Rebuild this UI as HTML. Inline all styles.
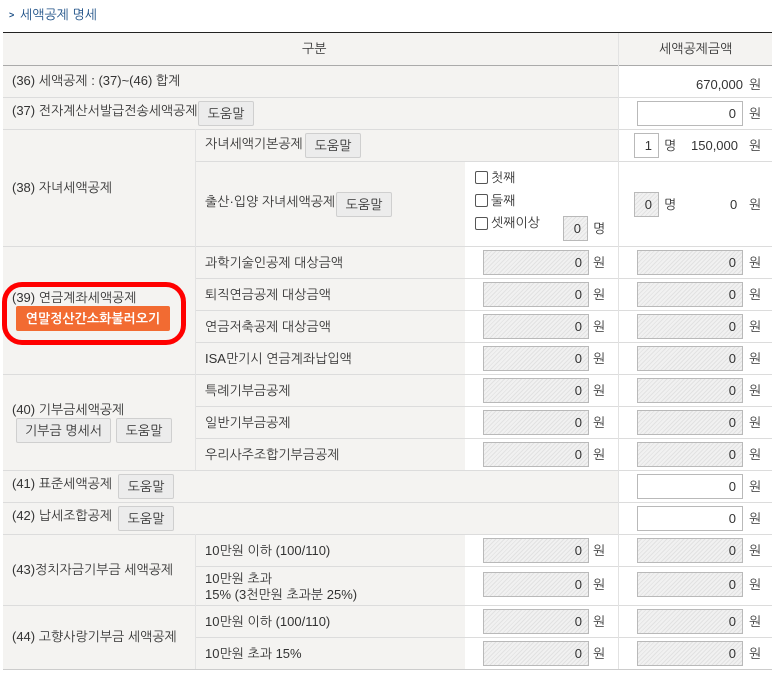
<!DOCTYPE html>
<html><head><meta charset="utf-8"><style>
*{margin:0;padding:0;box-sizing:border-box}
body{width:783px;height:678px;background:#fff;position:relative;font-family:"Liberation Sans","NanumGothic","Noto Sans CJK KR",sans-serif;font-size:13px;color:#333;overflow:hidden}
.a{position:absolute}
.g{position:absolute;background:#f4f3f1}
.hl{position:absolute;height:1px;background:#dcdcdc}
.vl{position:absolute;width:1px;background:#e2e2e2}
.t{position:absolute;white-space:nowrap;line-height:16px}
.in{position:absolute;height:25px;border:1px solid #b9b9b9;text-align:right;padding-right:6px;line-height:23px;color:#333;background:repeating-linear-gradient(135deg,#f1f1f1 0 2px,#e2e2e2 2px 3px)}
.w{background:#fff}
.btn{position:absolute;height:25px;border:1px solid #cfcfcf;background:#ececec;border-radius:2px;text-align:center;line-height:23px;color:#333}
.cb{position:absolute;width:13px;height:13px;border:1px solid #555;border-radius:2px;background:#fff}
</style></head><body>
<div class="t" style="left:9px;top:7px;color:#1c4f86;font-size:9px;font-weight:bold">&gt;</div>
<div class="t" style="left:20px;top:7px;color:#1c4f86;font-size:13px">세액공제 명세</div>

<div class="g" style="left:3px;top:33px;width:615px;height:636px"></div>
<div class="a" style="left:465px;top:246px;width:153px;height:224px;background:#fff"></div>
<div class="a" style="left:465px;top:161px;width:153px;height:85px;background:#fff"></div>
<div class="a" style="left:465px;top:534px;width:153px;height:135px;background:#fff"></div>
<div class="a" style="left:618px;top:33px;width:154px;height:32px;background:#f4f3f1"></div>

<div class="a" style="left:3px;top:32px;width:769px;height:1px;background:#222"></div>
<div class="a" style="left:3px;top:65px;width:769px;height:1px;background:#aaa"></div>
<div class="hl" style="left:3px;top:97px;width:769px"></div>
<div class="hl" style="left:3px;top:129px;width:769px"></div>
<div class="hl" style="left:195px;top:161px;width:577px"></div>
<div class="hl" style="left:3px;top:246px;width:769px"></div>
<div class="hl" style="left:195px;top:278px;width:577px"></div>
<div class="hl" style="left:195px;top:310px;width:577px"></div>
<div class="hl" style="left:195px;top:342px;width:577px"></div>
<div class="hl" style="left:3px;top:374px;width:769px"></div>
<div class="hl" style="left:195px;top:406px;width:577px"></div>
<div class="hl" style="left:195px;top:438px;width:577px"></div>
<div class="hl" style="left:3px;top:470px;width:769px"></div>
<div class="hl" style="left:3px;top:502px;width:769px"></div>
<div class="hl" style="left:3px;top:534px;width:769px"></div>
<div class="hl" style="left:195px;top:566px;width:577px"></div>
<div class="hl" style="left:3px;top:605px;width:769px"></div>
<div class="hl" style="left:195px;top:637px;width:577px"></div>
<div class="hl" style="left:3px;top:669px;width:769px;background:#ccc"></div>
<div class="vl" style="left:618px;top:33px;height:636px"></div>
<div class="vl" style="left:195px;top:129px;height:341px"></div>
<div class="vl" style="left:195px;top:534px;height:135px"></div>

<div class="t" style="left:302px;top:41px">구분</div>
<div class="t" style="left:659px;top:41px">세액공제금액</div>

<div class="t" style="left:12px;top:73px">(36) 세액공제 : (37)~(46) 합계</div>
<div class="t" style="left:696px;top:77px">670,000</div><div class="t" style="left:749px;top:77px">원</div>

<div class="t" style="left:12px;top:103px">(37) 전자계산서발급전송세액공제</div>
<div class="btn" style="left:198px;top:101px;width:56px">도움말</div>
<div class="in w" style="left:637px;top:101px;width:106px">0</div><div class="t" style="left:749px;top:106px">원</div>

<div class="t" style="left:12px;top:180px">(38) 자녀세액공제</div>
<div class="t" style="left:205px;top:136px">자녀세액기본공제</div>
<div class="btn" style="left:305px;top:133px;width:56px">도움말</div>
<div class="in w" style="left:634px;top:133px;width:25px">1</div><div class="t" style="left:664px;top:138px">명</div>
<div class="t" style="left:691px;top:138px">150,000</div><div class="t" style="left:749px;top:138px">원</div>
<div class="t" style="left:205px;top:194px">출산·입양 자녀세액공제</div>
<div class="btn" style="left:336px;top:192px;width:56px">도움말</div>
<div class="cb" style="left:475px;top:171px"></div><div class="t" style="left:491px;top:170px">첫째</div>
<div class="cb" style="left:475px;top:194px"></div><div class="t" style="left:491px;top:193px">둘째</div>
<div class="cb" style="left:475px;top:217px"></div><div class="t" style="left:491px;top:215px">셋째이상</div>
<div class="in" style="left:563px;top:216px;width:25px">0</div><div class="t" style="left:593px;top:221px">명</div>
<div class="in" style="left:634px;top:192px;width:25px">0</div><div class="t" style="left:664px;top:197px">명</div>
<div class="t" style="left:730px;top:197px">0</div><div class="t" style="left:749px;top:197px">원</div>

<div class="t" style="left:12px;top:290px">(39) 연금계좌세액공제</div>
<div class="a" style="left:2px;top:282px;width:184px;height:63px;border:5px solid #f00;border-radius:20px"></div>
<div class="a" style="left:16px;top:306px;width:154px;height:25px;background:#f26b32;border-radius:2px;color:#fff;font-weight:bold;text-align:center;line-height:25px;font-size:13px">연말정산간소화불러오기</div>
<div class="t" style="left:205px;top:255px">과학기술인공제 대상금액</div>
<div class="t" style="left:205px;top:287px">퇴직연금공제 대상금액</div>
<div class="t" style="left:205px;top:319px">연금저축공제 대상금액</div>
<div class="t" style="left:205px;top:351px">ISA만기시 연금계좌납입액</div>

<div class="t" style="left:12px;top:402px">(40) 기부금세액공제</div>
<div class="btn" style="left:16px;top:418px;width:95px">기부금 명세서</div>
<div class="btn" style="left:116px;top:418px;width:56px">도움말</div>
<div class="t" style="left:205px;top:383px">특례기부금공제</div>
<div class="t" style="left:205px;top:415px">일반기부금공제</div>
<div class="t" style="left:205px;top:447px">우리사주조합기부금공제</div>

<div class="t" style="left:12px;top:476px">(41) 표준세액공제</div>
<div class="btn" style="left:118px;top:474px;width:56px">도움말</div>
<div class="in w" style="left:637px;top:474px;width:106px">0</div><div class="t" style="left:749px;top:479px">원</div>
<div class="t" style="left:12px;top:508px">(42) 납세조합공제</div>
<div class="btn" style="left:118px;top:506px;width:56px">도움말</div>
<div class="in w" style="left:637px;top:506px;width:106px">0</div><div class="t" style="left:749px;top:511px">원</div>

<div class="t" style="left:12px;top:562px">(43)정치자금기부금 세액공제</div>
<div class="t" style="left:205px;top:543px">10만원 이하 (100/110)</div>
<div class="t" style="left:205px;top:571px">10만원 초과</div>
<div class="t" style="left:205px;top:587px">15% (3천만원 초과분 25%)</div>
<div class="t" style="left:12px;top:629px">(44) 고향사랑기부금 세액공제</div>
<div class="t" style="left:205px;top:614px">10만원 이하 (100/110)</div>
<div class="t" style="left:205px;top:646px">10만원 초과 15%</div>

<div class="in" style="left:483px;top:250px;width:106px">0</div><div class="t" style="left:593px;top:255px">원</div><div class="in" style="left:637px;top:250px;width:106px">0</div><div class="t" style="left:749px;top:255px">원</div>
<div class="in" style="left:483px;top:282px;width:106px">0</div><div class="t" style="left:593px;top:287px">원</div><div class="in" style="left:637px;top:282px;width:106px">0</div><div class="t" style="left:749px;top:287px">원</div>
<div class="in" style="left:483px;top:314px;width:106px">0</div><div class="t" style="left:593px;top:319px">원</div><div class="in" style="left:637px;top:314px;width:106px">0</div><div class="t" style="left:749px;top:319px">원</div>
<div class="in" style="left:483px;top:346px;width:106px">0</div><div class="t" style="left:593px;top:351px">원</div><div class="in" style="left:637px;top:346px;width:106px">0</div><div class="t" style="left:749px;top:351px">원</div>
<div class="in" style="left:483px;top:378px;width:106px">0</div><div class="t" style="left:593px;top:383px">원</div><div class="in" style="left:637px;top:378px;width:106px">0</div><div class="t" style="left:749px;top:383px">원</div>
<div class="in" style="left:483px;top:410px;width:106px">0</div><div class="t" style="left:593px;top:415px">원</div><div class="in" style="left:637px;top:410px;width:106px">0</div><div class="t" style="left:749px;top:415px">원</div>
<div class="in" style="left:483px;top:442px;width:106px">0</div><div class="t" style="left:593px;top:447px">원</div><div class="in" style="left:637px;top:442px;width:106px">0</div><div class="t" style="left:749px;top:447px">원</div>
<div class="in" style="left:483px;top:538px;width:106px">0</div><div class="t" style="left:593px;top:543px">원</div><div class="in" style="left:637px;top:538px;width:106px">0</div><div class="t" style="left:749px;top:543px">원</div>
<div class="in" style="left:483px;top:572px;width:106px">0</div><div class="t" style="left:593px;top:577px">원</div><div class="in" style="left:637px;top:572px;width:106px">0</div><div class="t" style="left:749px;top:577px">원</div>
<div class="in" style="left:483px;top:609px;width:106px">0</div><div class="t" style="left:593px;top:614px">원</div><div class="in" style="left:637px;top:609px;width:106px">0</div><div class="t" style="left:749px;top:614px">원</div>
<div class="in" style="left:483px;top:641px;width:106px">0</div><div class="t" style="left:593px;top:646px">원</div><div class="in" style="left:637px;top:641px;width:106px">0</div><div class="t" style="left:749px;top:646px">원</div>
</body></html>
